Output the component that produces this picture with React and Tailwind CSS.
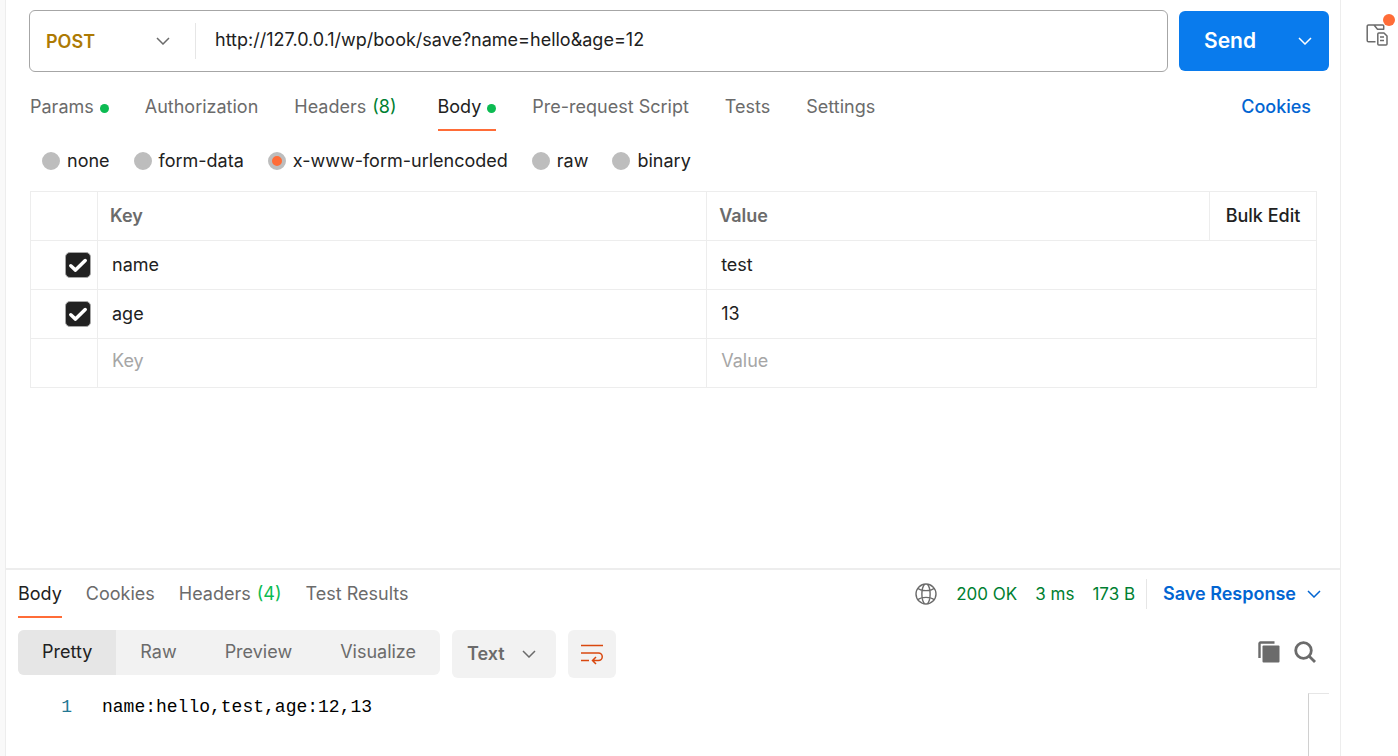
import React, { useState } from 'react'

const Chevron = ({ className = '' }) => (
    <svg viewBox="0 0 14 8" fill="none" stroke="currentColor" strokeWidth="1.5" className={`w-[14px] h-2 shrink-0 pointer-events-none ${className}`}>
        <path d="M1 1l6 6 6-6" />
    </svg>
)

const GlobeIcon = () => (
    <svg viewBox="0 0 22 22" fill="none" stroke="#6b6b6b" strokeWidth="1.4" className="size-[22px]">
        <circle cx="11" cy="11" r="10" />
        <path d="M9.500 1.200C6 5.500 6 16.500 9.500 20.800M12.500 1.200C16 5.500 16 16.500 12.500 20.800M2.600 5.200C6.500 8.400 15.500 8.400 19.400 5.200M2.600 16.800C6.500 13.600 15.500 13.600 19.400 16.800" />
    </svg>
)

const WrapIcon = () => (
    <svg viewBox="0 0 24 22" fill="none" stroke="#d9480f" strokeWidth="1.5" className="w-6 h-[22px]">
        <path d="M1 2.500h22M1 10h17.500a3.700 3.700 0 0 1 0 7.500H13M1 17.500h8M16 14l-3.500 3.500L16 21" />
    </svg>
)

const CopyIcon = () => (
    <svg viewBox="0 0 22 22" fill="none" className="size-[22px]">
        <path d="M1.500 17V2.500a1 1 0 0 1 1-1H16.500" stroke="#6b6b6b" strokeWidth="2.400" />
        <rect x="4.500" y="4.500" width="17" height="17" rx="1" fill="#6b6b6b" />
    </svg>
)

const SearchIcon = () => (
    <svg viewBox="0 0 22 22" fill="none" stroke="#6b6b6b" strokeWidth="2.800" className="size-[22px]">
        <circle cx="9.500" cy="9.500" r="7.800" />
        <path d="M15.200 15.200l5.800 5.800" />
    </svg>
)

const DocsIcon = () => (
    <svg viewBox="0 0 22 22" fill="none" stroke="#6b6b6b" strokeWidth="1.500" strokeLinejoin="round" className="size-[22px]">
        <path d="M9.500 17.700H2.500a1.300 1.300 0 0 1-1.300-1.300V2.200a1.200 1.200 0 0 1 1.200-1.200H16.700a1 1 0 0 1 1 1v3.200H11.500L8 1" />
        <path d="M12.800 9h5.200l3 3v8a1 1 0 0 1-1 1h-7.200a1 1 0 0 1-1-1v-10a1 1 0 0 1 1-1zM14 13h4M14 16.500h4" />
    </svg>
)

const requestTabs = [
    { label: 'Params', dot: true },
    { label: 'Authorization' },
    { label: 'Headers', count: 8 },
    { label: 'Body', dot: true },
    { label: 'Pre-request Script' },
    { label: 'Tests' },
    { label: 'Settings' },
]

const responseTabs = [
    { label: 'Body' },
    { label: 'Cookies' },
    { label: 'Headers', count: 4 },
    { label: 'Test Results' },
]

const bodyTypes = ['none', 'form-data', 'x-www-form-urlencoded', 'raw', 'binary']
const viewModes = ['Pretty', 'Raw', 'Preview', 'Visualize']

const initialRows = [
    { key: 'name', value: 'test' },
    { key: 'age', value: '13' },
]

const Tab = ({ tab, active, onClick, countClass }) => (
    <button
        type="button"
        onClick={onClick}
        className={`flex items-center pb-[10px] border-b-2 whitespace-nowrap ${
            active ? 'border-[#ff6c37] text-[#212121]' : 'border-transparent text-[#6b6b6b]'
        }`}
    >
        {tab.label}
        {tab.count && <span className={`ml-[6px] ${countClass}`}>({tab.count})</span>}
        {tab.dot && <span className="ml-[6px] mt-[2px] size-[9px] rounded-full bg-[#0cbb52]" />}
    </button>
)

const CheckBox = ({ label }) => (
    <label className="grid size-[26px] ml-auto mr-[6px]">
        <input
            type="checkbox"
            defaultChecked
            aria-label={label}
            className="peer appearance-none col-start-1 row-start-1 size-[26px] rounded-[5px] border border-[#a6a6a6] checked:bg-[#212121]"
        />
        <svg viewBox="0 0 26 26" fill="none" stroke="white" strokeWidth="3.500" strokeLinecap="round" strokeLinejoin="round" className="col-start-1 row-start-1 size-[26px] pointer-events-none opacity-0 peer-checked:opacity-100">
            <path d="M5.800 13.800l4.700 4.300L20.200 8.500" />
        </svg>
    </label>
)

const RequestPanel = () => {
    const [tab, setTab] = useState('Body')

    return (
        <section className="flex-1 pt-[10px]">
            <div className="flex items-center gap-[11px] pl-[23px] pr-[11px]">
                <div className="flex items-center flex-1 min-w-0 h-[62px] border border-[#a6a6a6] rounded-md">
                    <div className="grid items-center w-[165px] shrink-0">
                        <select
                            aria-label="Method"
                            className="col-start-1 row-start-1 appearance-none pl-4 pr-10 pt-[2px] text-[18px] leading-6 font-semibold text-[#ad7a03] outline-none"
                        >
                            <option>POST</option>
                            <option>GET</option>
                        </select>
                        <Chevron className="col-start-1 row-start-1 justify-self-end mr-[25px] text-[#6b6b6b]" />
                    </div>
                    <div className="w-px h-9 bg-[#e6e6e6]" />
                    <input
                        type="text"
                        aria-label="Request URL"
                        defaultValue="http://127.0.0.1/wp/book/save?name=hello&age=12"
                        className="flex-1 min-w-0 pl-[19px] pb-[2px] outline-none"
                    />
                </div>
                <div className="flex items-center w-[150px] h-[60px] rounded-md bg-[#097bed] text-white">
                    <button type="button" className="flex-1 h-full pl-[25px] text-left text-[21px] font-semibold">Send</button>
                    <button type="button" aria-label="Send options" className="h-full px-[17px]">
                        <Chevron />
                    </button>
                </div>
            </div>

            <div className="flex items-start justify-between pl-6 pr-[29px] pt-[23px]">
                <div className="flex gap-9">
                    {requestTabs.map((item) => (
                        <Tab
                            key={item.label}
                            tab={item}
                            active={tab === item.label}
                            onClick={() => setTab(item.label)}
                            countClass="text-[#007f31] mr-[5px]"
                        />
                    ))}
                </div>
                <button type="button" className="font-medium text-[#0265d2]">Cookies</button>
            </div>

            <div className="flex gap-6 pl-9 pt-[18px]">
                {bodyTypes.map((type) => (
                    <label key={type} className="flex items-center gap-[7px] text-[#212121]">
                        <input
                            type="radio"
                            name="bodyType"
                            defaultChecked={type === 'x-www-form-urlencoded'}
                            className="appearance-none size-[18px] rounded-full bg-[#bdbdbd] border-4 border-[#bdbdbd] checked:bg-[#ff6c37]"
                        />
                        {type}
                    </label>
                ))}
            </div>

            <div className="pl-6 pr-[23px] pt-[18px]">
                <table className="w-full table-fixed border-collapse text-left [&_th]:border [&_td]:border-y [&_th]:border-[#ededed] [&_td]:border-[#ededed]">
                    <thead>
                        <tr className="h-[49px] text-[#6b6b6b]">
                            <th aria-label="Enabled" className="w-[67px]" />
                            <th className="w-9/19 pl-3 font-semibold">Key</th>
                            <th className="pl-3 font-semibold">Value</th>
                            <th className="w-[107px] text-center font-medium text-[#212121]">
                                <button type="button" className="font-medium">Bulk Edit</button>
                            </th>
                        </tr>
                    </thead>
                    <tbody>
                        {initialRows.map((row) => (
                            <tr key={row.key} className="h-[49px]">
                                <td className="border-x"><CheckBox label={`Include ${row.key}`} /></td>
                                <td className="border-x pl-[14px]">
                                    <input type="text" aria-label="Key" defaultValue={row.key} className="block w-full outline-none" />
                                </td>
                                <td colSpan={2} className="border-x pl-[14px]">
                                    <input type="text" aria-label="Value" defaultValue={row.value} className="block w-full outline-none" />
                                </td>
                            </tr>
                        ))}
                        <tr className="h-[49px]">
                            <td className="border-x" />
                            <td className="border-x pl-[14px] pb-1">
                                <input type="text" aria-label="New key" placeholder="Key" className="block w-full outline-none placeholder:text-[#a6a6a6]" />
                            </td>
                            <td colSpan={2} className="border-x pl-[14px] pb-1">
                                <input type="text" aria-label="New value" placeholder="Value" className="block w-full outline-none placeholder:text-[#a6a6a6]" />
                            </td>
                        </tr>
                    </tbody>
                </table>
            </div>
        </section>
    )
}

const ResponsePanel = () => {
    const [tab, setTab] = useState('Body')
    const [mode, setMode] = useState('Pretty')

    return (
        <section className="border-t-2 border-[#ededed]">
            <div className="flex items-start justify-between pl-3 pr-[19px]">
                <div className="flex gap-6 pt-3">
                    {responseTabs.map((item) => (
                        <Tab
                            key={item.label}
                            tab={item}
                            active={tab === item.label}
                            onClick={() => setTab(item.label)}
                            countClass="text-[#0cbb52]"
                        />
                    ))}
                </div>
                <div className="flex items-center pt-[9px] text-[#007f31]">
                    <GlobeIcon />
                    <div className="flex gap-[18px] pl-[19px] pr-[11px] text-[17px]">
                        <span>200 OK</span>
                        <span>3 ms</span>
                        <span>173 B</span>
                    </div>
                    <button type="button" className="flex items-center gap-[11px] h-[30px] pl-4 border-l border-[#e6e6e6] font-semibold text-[#0265d2]">
                        Save Response
                        <Chevron />
                    </button>
                </div>
            </div>

            <div className="flex items-start gap-3 pl-3 pr-6 pt-3">
                <div className="flex h-[45px] rounded-md overflow-hidden bg-[#f2f2f2]">
                    {viewModes.map((item) => (
                        <button
                            key={item}
                            type="button"
                            onClick={() => setMode(item)}
                            className={`px-6 pb-[2px] ${mode === item ? 'bg-[#e6e6e6] text-[#212121]' : 'text-[#6b6b6b]'}`}
                        >
                            {item}
                        </button>
                    ))}
                </div>
                <div className="grid items-center w-[104px] h-12 rounded-md bg-[#f2f2f2] text-[#6b6b6b]">
                    <select aria-label="Format" className="col-start-1 row-start-1 h-12 appearance-none pl-[15px] font-semibold outline-none">
                        <option>Text</option>
                        <option>JSON</option>
                    </select>
                    <Chevron className="col-start-1 row-start-1 justify-self-end mr-5" />
                </div>
                <button type="button" aria-label="Wrap lines" className="grid place-items-center size-12 rounded-md bg-[#f2f2f2]">
                    <WrapIcon />
                </button>
                <div className="flex gap-[14px] ml-auto pt-[11px]">
                    <button type="button" aria-label="Copy"><CopyIcon /></button>
                    <button type="button" aria-label="Search"><SearchIcon /></button>
                </div>
            </div>

            <div className="flex h-[78px] pt-[15px] pr-[11px] font-['Liberation_Mono',monospace]">
                <span className="w-[66px] pt-[2px] text-right text-[#237893]">1</span>
                <code className="flex-1 pl-[30px] pt-[2px] font-['Liberation_Mono',monospace] text-black">name:hello,test,age:12,13</code>
                <div className="w-[21px] border-l border-t border-l-[#d0d0d0] border-t-[#e6e6e6]" />
            </div>
        </section>
    )
}

const App = () => (
    <div className="flex min-h-screen bg-white text-[18px] leading-6 text-[#212121] font-['Inter',sans-serif]">
        <div className="w-[6px] shrink-0 bg-[#f9f9f9] border-r border-[#ededed]" />
        <main className="flex flex-col flex-1 min-w-0">
            <RequestPanel />
            <ResponsePanel />
        </main>
        <aside className="w-[58px] shrink-0 border-l border-[#ededed] pl-[25px] pt-6">
            <button type="button" aria-label="Documentation" className="relative block">
                <DocsIcon />
                <span className="absolute -top-[10px] left-[17px] size-3 rounded-full bg-[#ff6c37]" />
            </button>
        </aside>
    </div>
)

export default App
